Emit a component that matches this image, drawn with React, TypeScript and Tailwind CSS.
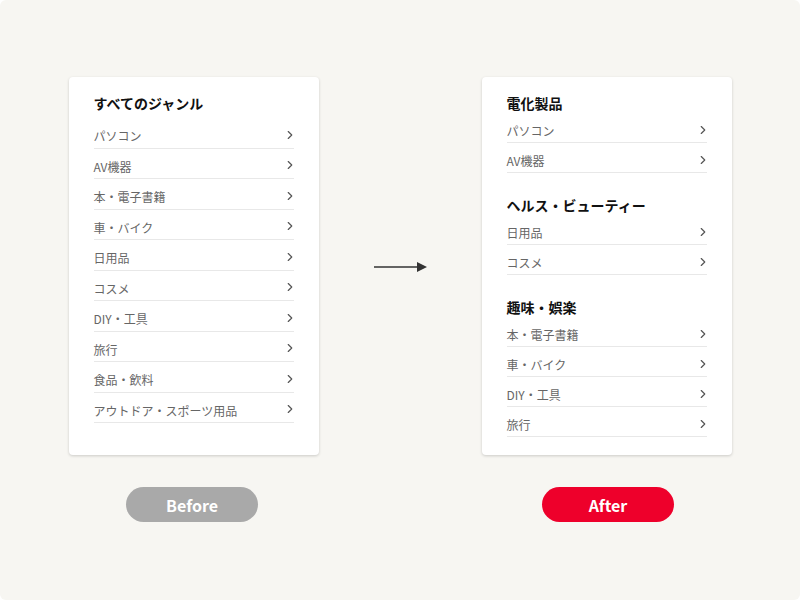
import { ChevronRight } from 'lucide-react';

type Section = { title: string; items: string[] };

const before: Section[] = [
  {
    title: 'すべてのジャンル',
    items: [
      'パソコン',
      'AV機器',
      '本・電子書籍',
      '車・バイク',
      '日用品',
      'コスメ',
      'DIY・工具',
      '旅行',
      '食品・飲料',
      'アウトドア・スポーツ用品',
    ],
  },
];

const after: Section[] = [
  { title: '電化製品', items: ['パソコン', 'AV機器'] },
  { title: 'ヘルス・ビューティー', items: ['日用品', 'コスメ'] },
  { title: '趣味・娯楽', items: ['本・電子書籍', '車・バイク', 'DIY・工具', '旅行'] },
];

function Row({ label, tight }: { label: string; tight?: boolean }) {
  return (
    <li
      className={`flex items-center justify-between border-b border-[#e8e8e8] pt-[8px] text-[12px] leading-[20px] text-[#666] ${
        tight ? 'pb-[1px]' : 'pb-[1.5px]'
      }`}
    >
      <span>{label}</span>
      <ChevronRight size={14} strokeWidth={2} className="mr-[-3px] mt-[-3px] text-[#555]" />
    </li>
  );
}

function Card({ sections, tight }: { sections: Section[]; tight?: boolean }) {
  return (
    <div className="h-[378px] w-[250px] rounded-[4px] bg-white px-[25px] pt-[15px] shadow-[0_1px_3px_rgba(0,0,0,0.18)]">
      {sections.map((s, i) => (
        <section key={s.title} className={i > 0 ? 'mt-[21px]' : ''}>
          <h2 className={`text-[14px] font-bold leading-[22px] text-[#111] ${tight ? 'mb-[-1px]' : 'mb-[4px]'}`}>
            {s.title}
          </h2>
          <ul>
            {s.items.map((item) => (
              <Row key={item} label={item} tight={tight} />
            ))}
          </ul>
        </section>
      ))}
    </div>
  );
}

export default function App() {
  return (
    <div
      className="h-[600px] w-[800px] overflow-hidden rounded-[6px] bg-[#f7f6f2] pt-[77px]"
      style={{ fontFamily: '"Noto Sans CJK JP", "Noto Sans", sans-serif' }}
    >
      <div className="flex items-center justify-center gap-[55px]">
        <Card sections={before} />
        <svg width="53" height="12" viewBox="0 0 53 12" className="mt-[2px] shrink-0">
          <line x1="0" y1="6" x2="45" y2="6" stroke="#333" strokeWidth="1.6" />
          <path d="M43 1 L53 6 L43 11 Z" fill="#333" />
        </svg>
        <Card sections={after} tight />
      </div>
      <div className="mt-[32px] flex justify-center gap-[284px]">
        <div className="flex h-[35px] w-[132px] items-center justify-center rounded-full bg-[#a9a9a9] text-[16px] font-bold text-white">
          Before
        </div>
        <div className="flex h-[35px] w-[132px] items-center justify-center rounded-full bg-[#ee002b] text-[16px] font-bold text-white">
          After
        </div>
      </div>
    </div>
  );
}
